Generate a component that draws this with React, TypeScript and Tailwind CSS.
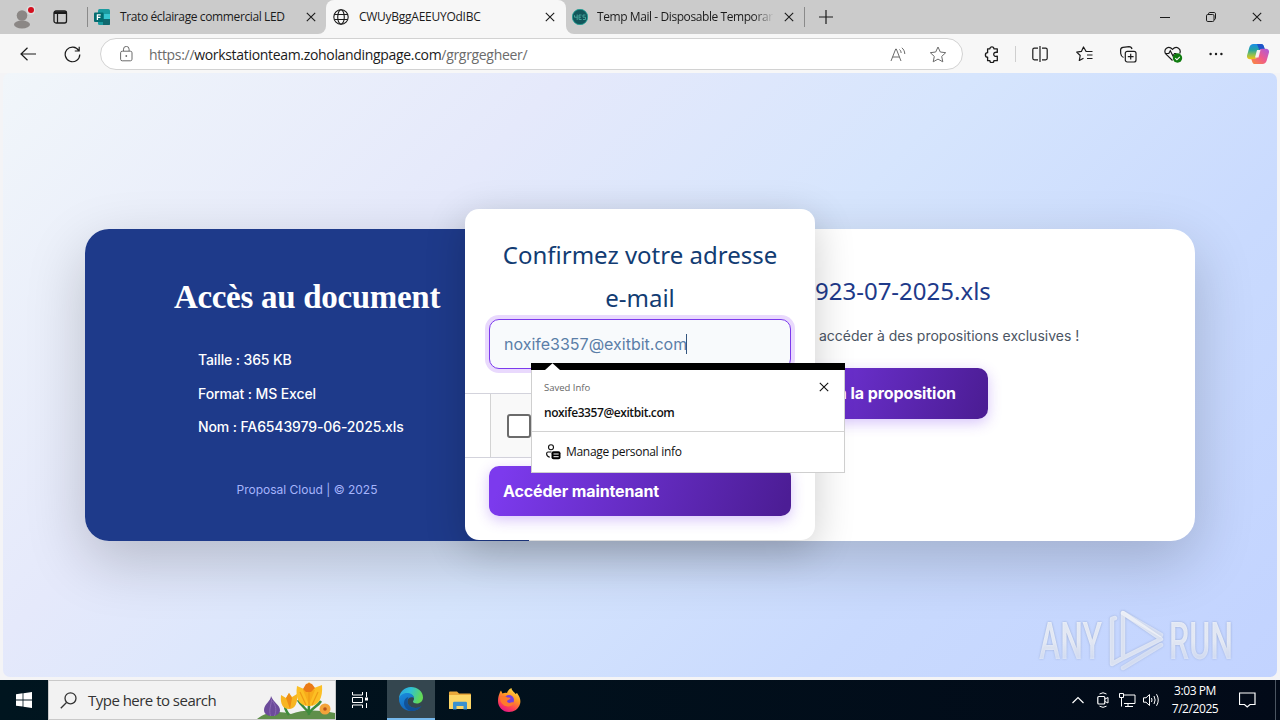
import React from "react";

type IconProps = { w: number; h: number; children: React.ReactNode; className?: string };

function Icon({ w, h, children, className = "" }: IconProps) {
  return (
    <svg width={w} height={h} viewBox={`0 0 ${w} ${h}`} fill="none" stroke="currentColor" className={`shrink-0 ${className}`}>
      {children}
    </svg>
  );
}

const Close = ({ className = "" }: { className?: string }) => (
  <Icon w={10} h={10} className={className}>
    <path d="M.8.8l8.4 8.4M9.2.8L.8 9.2" strokeWidth="1.1" />
  </Icon>
);

function TabStrip() {
  return (
    <div className="flex h-[34px] bg-[#cbcbcb] text-[12px] text-[#1b1b1b]">
      <div className="flex w-[326px] shrink-0 items-center bg-[#f7f7f7]">
        <div className="flex h-full w-full items-center rounded-br-[8px] bg-[#cbcbcb]">
          <Icon w={22} h={24} className="ml-[13px]">
            <circle cx="9" cy="10.500" r="5.300" fill="#8b8785" stroke="none" />
            <ellipse cx="9" cy="19.500" rx="8" ry="4" fill="#8b8785" stroke="none" />
            <circle cx="18" cy="5" r="4.500" fill="#dedede" stroke="none" />
            <circle cx="18" cy="5" r="3" fill="#d40f1f" stroke="none" />
          </Icon>
          <Icon w={15} h={14} className="ml-[18px]">
            <rect x="1" y="1" width="12.500" height="12" rx="2" strokeWidth="1.300" />
            <path d="M1 2.700h12.500" strokeWidth="2.600" />
            <path d="M4.500 3v10" strokeWidth="1.200" />
          </Icon>
          <div className="ml-[19px] h-5 w-px bg-[#8a8a8a]" />
          <Icon w={16} h={16} className="ml-[6px]">
            <rect x="4" y="0" width="12" height="16" rx="1.500" fill="#1b9ba0" stroke="none" />
            <path d="M10 5h6v5h-6z" fill="#37c6d0" stroke="none" />
            <path d="M9 10h7v5a1 1 0 0 1-1 1H9z" fill="#10686e" stroke="none" />
            <rect x="0" y="3.500" width="9.500" height="9.500" rx="1" fill="#036c70" stroke="none" />
            <path d="M3.400 11V5.800h3.300M3.400 8.300h3" stroke="#fff" strokeWidth="1.300" />
          </Icon>
          <span className="ml-[10px] w-[166px] whitespace-nowrap tracking-[-0.38px]">Trato éclairage commercial LED</span>
          <Close className="ml-[20px]" />
        </div>
      </div>
      <div className="w-[240px] shrink-0 bg-[#cbcbcb]">
        <div className="flex h-full items-center rounded-t-[8px] bg-[#f7f7f7]">
          <Icon w={16} h={16} className="ml-[7px]">
            <circle cx="8" cy="8" r="7.200" strokeWidth="1.100" />
            <ellipse cx="8" cy="8" rx="3.300" ry="7.200" strokeWidth="1.100" />
            <path d="M1.500 5.500h13M1.500 10.500h13" strokeWidth="1.100" />
          </Icon>
          <span className="ml-[10px] w-[160px] whitespace-nowrap tracking-[-0.26px]">CWUyBggAEEUYOdIBC</span>
          <Close className="ml-[26px]" />
        </div>
      </div>
      <div className="min-w-0 flex-1 bg-[#f7f7f7]">
        <div className="flex h-full items-center rounded-bl-[8px] bg-[#cbcbcb]">
          <Icon w={16} h={16} className="ml-[6px]">
            <circle cx="8" cy="8" r="7.700" fill="#12565b" stroke="#1da598" strokeWidth=".8" />
            <path d="M2.500 6.200v2h3M5.200 5.500V11M7 6h2.500M7 8.200h2M7 10.500h2.500M7 6v4.500M13.500 6H11v2.200h2.500v2.300H11" stroke="#49a99f" strokeWidth=".9" />
          </Icon>
          <span className="ml-[9px] w-[177px] whitespace-nowrap bg-gradient-to-r from-[#1b1b1b] from-88% to-[#cbcbcb] bg-clip-text tracking-[-0.42px] text-transparent">
            Temp Mail - Disposable Temporar
          </span>
          <Close className="ml-[10px]" />
          <div className="ml-[10px] h-5 w-px bg-[#8a8a8a]" />
          <Icon w={14} h={14} className="ml-[14px]">
            <path d="M7 0v14M0 7h14" strokeWidth="1.200" />
          </Icon>
          <div className="ml-auto flex items-center gap-[36px] pr-[18px]">
            <Icon w={10} h={10}><path d="M0 5.500h10" /></Icon>
            <Icon w={10} h={10}>
              <rect x=".5" y="2.500" width="7.500" height="7" rx="1.300" />
              <path d="M2.500 2.500V1.800C2.500 1 3 .5 3.800.5H8c1 0 1.500.5 1.500 1.500v4.500c0 .6-.5 1-1.300 1" />
            </Icon>
            <Close />
          </div>
        </div>
      </div>
    </div>
  );
}

function Copilot() {
  return (
    <svg width="22" height="20" viewBox="0 0 22 20" className="shrink-0">
      <defs>
        <linearGradient id="cpA" x1="0" y1="0" x2="0" y2="1">
          <stop offset="0" stopColor="#1a8fe8" />
          <stop offset=".4" stopColor="#27a5a0" />
          <stop offset=".7" stopColor="#8cc152" />
          <stop offset="1" stopColor="#f4c214" />
        </linearGradient>
        <linearGradient id="cpB" x1="1" y1="0" x2="0" y2="1">
          <stop offset="0" stopColor="#a85be0" />
          <stop offset=".5" stopColor="#ee5a8c" />
          <stop offset="1" stopColor="#fb8d3a" />
        </linearGradient>
      </defs>
      <path d="M6.500 0H14c1.500 0 2.300.8 2.800 2.300L17.700 5H15c-1.800 0-2.600.8-3.100 2.500L9.800 13c-.5 1.500-1.300 2.200-2.800 2.200H3C.6 15.200-.4 13.500.1 11.200L2.300 3.500C3 1.200 4.200 0 6.500 0z" fill="url(#cpA)" />
      <path d="M10 0h4c1.500 0 2.300.8 2.800 2.300L17.700 5H15c-1.300 0-2 .4-2.600 1.300z" fill="#2054c9" />
      <path d="M15.500 20H8c-1.500 0-2.300-.8-2.800-2.300L4.300 15H7c1.800 0 2.600-.8 3.100-2.500L12.200 7c.5-1.500 1.300-2.200 2.800-2.200h4c2.400 0 3.400 1.700 2.900 4l-2.200 7.700C19 18.800 17.800 20 15.500 20z" fill="url(#cpB)" />
      <path d="M10 6h3.500l-2 7.500H8z" fill="#f7f0f2" />
    </svg>
  );
}

function Toolbar() {
  return (
    <div className="flex h-[39px] items-center bg-[#f7f7f7] pb-px pt-[2px] text-[#1b1b1b]">
      <Icon w={16} h={14} className="ml-[20px]">
        <path d="M16 7H1M7.500 .8L1 7l6.500 6.200" strokeWidth="1.200" />
      </Icon>
      <Icon w={17} h={17} className="ml-[28px]">
        <path d="M14.800 4.700A7.300 7.300 0 1 0 15.800 8.500M15.200.8v4.200h-4.400" strokeWidth="1.200" />
      </Icon>
      <div className="ml-[19px] flex h-8 w-[863px] items-center rounded-full border border-[#d2d2d2] bg-white text-[#6b6b6b]">
        <Icon w={13} h={16} className="ml-[19px]">
          <rect x=".6" y="5.200" width="11.400" height="9.600" rx="1.600" />
          <path d="M3.500 5V3.200a2.800 2.800 0 0 1 5.600 0V5" />
          <circle cx="6.300" cy="10" r=".9" fill="currentColor" stroke="none" />
        </Icon>
        <span className="ml-[16px] whitespace-nowrap text-[14px] tracking-[-0.32px]">
          https://<span className="text-[#1b1b1b]">workstationteam.zoholandingpage.com</span>/grgrgegheer/
        </span>
        <Icon w={17} h={15} className="ml-auto">
          <path d="M1 14L5.700 2h.6L11 14M2.600 10h6.700M9.500 2.500c1 .8 1.600 2 1.600 3.500M11.800.8c1.800 1.400 2.800 3.200 3 6.200" />
        </Icon>
        <Icon w={18} h={17} className="ml-[22px] mr-[15px]">
          <path d="M9 1l2.300 5 5.400.7-4 3.700 1.100 5.400L9 13.100l-4.800 2.700 1.100-5.400-4-3.700L6.700 6z" strokeLinejoin="round" />
        </Icon>
      </div>
      <Icon w={16} h={17} className="ml-[21px]">
        <path d="M3.600 2.800h2.300a2 2 0 0 1 4 0h3.400v3.600c-2.600-.6-3.600.6-3.600 1.900s1 2.500 3.600 1.900v4.500H9.900a2 2 0 0 1-4 0H3.600v-3.600a2 2 0 0 1 0-4.400z" strokeWidth="1.300" strokeLinejoin="round" />
      </Icon>
      <div className="ml-[15px] h-4 w-px bg-[#cfcfcf]" />
      <Icon w={16} h={16} className="ml-[16px]">
        <path d="M6 2.200H2.300Q.8 2.200.8 3.700v8.600q0 1.500 1.500 1.500H6M10 2.200h3.700q1.500 0 1.500 1.500v8.600q0 1.500-1.500 1.500H10M8 0v16" strokeWidth="1.200" />
      </Icon>
      <Icon w={17} h={16} className="ml-[28px]">
        <path d="M9.500 5.500h7M11 9h5.500M11 12.500h5.500M10 5.300L7.500 1 5.400 5.400l-4.700.7L4.200 9.500 3.300 14.500l4.200-2.200" strokeWidth="1.200" strokeLinejoin="round" />
      </Icon>
      <Icon w={17} h={17} className="ml-[27px]">
        <rect x="5.300" y="5.300" width="10.700" height="10.700" rx="2" strokeWidth="1.200" />
        <path d="M10.700 7.800v5.800M7.800 10.700h5.800M3.500 11.500C1.800 10.800.9 9.500.7 7.500L.6 4C.6 2.500 1.500 1.500 3 1.300L9 .7c1.500 0 2.600.7 3 2.300" strokeWidth="1.200" />
      </Icon>
      <Icon w={19} h={17} className="ml-[27px]">
        <path d="M8.500 14.500L2 8.200C.3 6.300.6 3.500 2.500 2.200c2-1.400 4.300-.8 6 1.200 1.700-2 4-2.600 6-1.200 1.700 1.200 2 3.500 1.200 5.300M1 7.500h3.800l1.500-2.800L9 10l1.500-2.500h2" strokeWidth="1.200" />
        <circle cx="13.500" cy="12" r="4.700" fill="#107c10" stroke="none" />
        <path d="M11.300 12.200l1.600 1.600 2.900-3" stroke="#fff" strokeWidth="1.100" />
      </Icon>
      <Icon w={14} h={4} className="ml-[26px]">
        <g fill="currentColor" stroke="none">
          <circle cx="1.600" cy="2" r="1.200" /><circle cx="7" cy="2" r="1.200" /><circle cx="12.400" cy="2" r="1.200" />
        </g>
      </Icon>
      <div className="ml-[24px]"><Copilot /></div>
    </div>
  );
}

function SavedInfo() {
  return (
    <div className="absolute left-[66px] top-[154px] z-20 flex h-[110px] w-[314px] flex-col font-['Open_Sans','Noto_Sans',sans-serif] text-[12px] text-[#111]">
      <div className="h-[7px] bg-black">
        <svg width="40" height="7" viewBox="0 0 40 7"><path d="M14 7L21.500.3 29 7z" fill="#fff" /></svg>
      </div>
      <div className="flex flex-1 flex-col border-x border-b border-[#cfcfcf] bg-white">
        <div className="flex h-[62px] flex-col border-b border-[#d2d2d2] pl-[12px]">
          <div className="flex items-center justify-between pr-[15px] pt-[10px]">
            <span className="text-[9.500px] leading-[16px] text-[#666]">Saved Info</span>
            <Close className="mb-[2px]" />
          </div>
          <span className="mt-[9px] text-[12px] font-semibold leading-[16px] tracking-[-0.42px]">noxife3357@exitbit.com</span>
        </div>
        <div className="flex flex-1 items-center pl-[14px]">
          <Icon w={15} h={16}>
            <circle cx="5" cy="3.200" r="2.500" strokeWidth="1.100" />
            <path d="M5.500 8H2.200C1 8 .6 8.800.6 9.700c0 1.800 1 2.900 3.200 3.500" strokeWidth="1.100" />
            <rect x="5.500" y="7.300" width="9" height="8" rx="2" fill="#000" stroke="none" />
            <path d="M7.500 10h5.200M7.500 12.700h5.200" stroke="#fff" strokeWidth="1" />
          </Icon>
          <span className="ml-[5px] tracking-[-0.3px]">Manage personal info</span>
        </div>
      </div>
    </div>
  );
}

function Modal() {
  return (
    <div className="absolute left-[380px] top-[-20px] z-10 flex h-[331px] w-[350px] flex-col rounded-[14px] bg-white shadow-[0_10px_40px_rgba(0,0,0,0.2)]">
      <h2 className="mx-[24px] mt-[24px] h-[86px] text-center font-['Noto_Sans','Open_Sans',sans-serif] text-[24px] leading-[43px] text-[#123c73]">
        Confirmez votre adresse
        <br />
        e-mail
      </h2>
      <div className="mx-[24px] flex h-[50px] items-center rounded-[10px] border border-[#7c3aed] bg-[#f8fafc] pl-[14px] text-[16px] text-[#5b7ea8] ring-4 ring-[#e9d9fd]">
        <span>noxife3357@exitbit.com</span>
        <span className="-ml-px h-5 w-px bg-[#33557f]" />
      </div>
      <div className="mt-[24px] flex h-[65px] border-y border-[#d3d3dc]">
        <div className="ml-[25px] flex flex-1 items-center border-l border-[#d3d3d3] bg-[#f9f9f9] pl-[16px]">
          <div className="h-6 w-6 rounded-[3px] border-2 border-[#6b6b6b] bg-white" />
        </div>
      </div>
      <div className="mx-[24px] mt-[8px] flex h-[50px] items-center rounded-[10px] bg-[linear-gradient(110deg,#7c3aed_5%,#4c1d95_97%)] pl-[14px] text-[16px] font-bold tracking-[-0.13px] text-white shadow-[0_4px_14px_rgba(124,58,237,0.3)]">
        Accéder maintenant
      </div>
      <SavedInfo />
    </div>
  );
}

function Watermark() {
  return (
    <svg width="210" height="66" viewBox="1036 606 210 66" className="absolute bottom-[5px] right-[31px] overflow-visible drop-shadow-[0_0_1px_rgba(90,110,150,0.6)]">
      <defs>
        <linearGradient id="wm" x1="0" y1="0" x2="0" y2="1">
          <stop offset=".5" stopColor="#fff" stopOpacity=".72" />
          <stop offset=".75" stopColor="#fff" stopOpacity=".5" />
        </linearGradient>
      </defs>
      <g fill="url(#wm)" fontFamily="Roboto, sans-serif" fontSize="52" fontWeight="500">
        <text x="1039" y="659" textLength="63" lengthAdjust="spacingAndGlyphs">ANY</text>
        <text x="1169" y="659" textLength="64" lengthAdjust="spacingAndGlyphs">RUN</text>
      </g>
      <g fill="none" stroke="#fff" strokeOpacity=".62" strokeWidth="4.500" strokeLinejoin="round" strokeLinecap="round">
        <path d="M1115 618l-3 1v45l9-5 40-20-38-26v43" />
        <path d="M1123 613l38 22M1123 668l38-23" strokeOpacity=".5" />
      </g>
    </svg>
  );
}

function Page() {
  return (
    <div className="h-[607px] bg-[#f4f4f6] px-[3px] pb-[3px]">
      <div className="relative flex h-full flex-col overflow-hidden rounded-[7px] bg-[linear-gradient(135deg,#f1f6fa_0%,#e5e9fb_30%,#d6e5fd_52%,#c9dafe_75%,#c2d3ff_100%)] px-[82px] pt-[156px] font-[Inter,sans-serif]">
        <div className="relative flex h-[312px] shrink-0 rounded-[24px] bg-white shadow-[0_20px_60px_rgba(0,0,0,0.2)]">
          <div className="flex w-[444px] flex-col items-center rounded-l-[24px] bg-[#1e3a8a] text-white">
            <h1 className="mt-[46px] whitespace-nowrap font-['Liberation_Serif',serif] text-[33px] font-bold leading-[44px] tracking-[-0.3px]">Accès au document</h1>
            <div className="mt-[24px] flex w-full flex-col pl-[113px] text-[14px] font-medium leading-[33.500px] tracking-[-0.12px]">
              <span>Taille : 365 KB</span>
              <span>Format : MS Excel</span>
              <span>Nom : FA6543979-06-2025.xls</span>
            </div>
            <span className="mt-[36px] text-[12px] leading-[20px] text-[#a5b4fc]">Proposal Cloud | © 2025</span>
          </div>
          <div className="flex min-w-0 flex-1 flex-col overflow-hidden rounded-r-[24px]">
            <h2 className="ml-[286px] mt-[40px] whitespace-nowrap font-['Noto_Sans','Open_Sans',sans-serif] text-[24px] leading-[43px] text-[#1e3a8a]">923-07-2025.xls</h2>
            <p className="ml-[290px] mt-[12px] whitespace-nowrap text-[14px] leading-[24px] text-[#4b5563]">accéder à des propositions exclusives !</p>
            <div className="ml-[207px] mt-[20px] flex h-[51px] w-[252px] shrink-0 items-center justify-end rounded-[10px] bg-[linear-gradient(110deg,#7c3aed_5%,#4c1d95_97%)] pb-[2px] pr-[32px] text-[16px] font-bold tracking-[-0.08px] text-white shadow-[0_4px_14px_rgba(124,58,237,0.3)]">
              à la proposition
            </div>
          </div>
          <Modal />
        </div>
        <Watermark />
      </div>
    </div>
  );
}

function Flowers() {
  return (
    <svg width="78" height="38" viewBox="0 0 78 38" className="ml-auto shrink-0 self-end">
      <path d="M0 38c8-7 22-9 34-5 12-5 30-4 44-1v6z" fill="#5f8f4a" />
      <path d="M32 34c-4-5-5-8-4-13M52 34c-1-8 0-12 2-18M52 32c3-5 9-7 12-12M52 32c-4-5-8-8-11-13" stroke="#3e8b3c" strokeWidth="2.500" fill="none" />
      <path d="M14 15c0 5-7 8-7 14 0 4 4 6 8 6s8-2 8-6c0-5-7-8-9-14z" fill="#6c4b9b" />
      <path d="M14.500 18c0 6-3 10-1 17M15.500 20c4 5 4 10 2 15" stroke="#8a69b3" fill="none" />
      <path d="M24 14l5 3 3-5 3 4 5-3c1 9-2 15-8 15s-9-5-8-14z" fill="#f7b521" />
      <path d="M29 17l3-5 3 5-2 11z" fill="#ee8c13" />
      <path d="M40 5l7 3 5-7 5 6 8-3c1 13-3 21-13 21S38 18 40 5z" fill="#fcbf24" />
      <path d="M46 9l6 15 6-15" fill="#f8ac1a" />
      <path d="M43 11l6 13M61 11l-6 13M52 11v14" fill="none" stroke="#ee9a15" strokeWidth="1.200" />
      <path d="M46 8l3-5 3-1 3 1 3 4-4 4h-5z" fill="#ea7a17" />
      <circle cx="68" cy="28" r="5.500" fill="#f3a33a" />
      <circle cx="68" cy="28" r="1.800" fill="#b8551a" />
    </svg>
  );
}

function EdgeLogo() {
  return (
    <svg width="24" height="24" viewBox="0 0 24 24">
      <defs>
        <linearGradient id="egA" x1="0" y1="0" x2="1" y2=".3">
          <stop offset="0" stopColor="#2b9fe2" /><stop offset=".5" stopColor="#2fc1d4" /><stop offset="1" stopColor="#62d957" />
        </linearGradient>
        <linearGradient id="egB" x1="0" y1="0" x2=".5" y2="1">
          <stop offset="0" stopColor="#1a8ddd" /><stop offset="1" stopColor="#1262b8" />
        </linearGradient>
      </defs>
      <path d="M0 12C0 5 5.500 0 12 0s12 4.600 12 10.500c0 3.800-3 6-6 6-2.500 0-4-1-4-2 0-.7 1-1.200 1-3 0-2.700-2.600-4.500-6-4.500-4 0-8 2-9 5z" fill="url(#egA)" />
      <path d="M0 12c.5-3.500 4-6 8-6 3.500 0 6.500 1.800 7 5-1-1-6-1.500-6.500 3-.4 4 3.500 7 8 7 2.500 0 4.500-1 6-2-2 3-6 5-10.500 5C5 24 0 18.500 0 12z" fill="url(#egB)" />
      <path d="M8.500 14c-.4 4 3.500 7 8 7 2.500 0 4.500-1 6-2-2 3-6 5-10.500 5-4-1-7-4-7-8 0-3 2-5.500 4.500-6C8.800 11 8.600 12.500 8.500 14z" fill="#114a8b" opacity=".8" />
    </svg>
  );
}

function Firefox() {
  return (
    <svg width="24" height="24" viewBox="0 0 24 24">
      <defs>
        <linearGradient id="ffA" x1=".8" y1="0" x2=".3" y2="1">
          <stop offset="0" stopColor="#ffe14d" /><stop offset=".4" stopColor="#ff9a22" /><stop offset=".75" stopColor="#ff4055" /><stop offset="1" stopColor="#e31587" />
        </linearGradient>
      </defs>
      <path d="M2.500 5.500C3 3.500 4 2.500 4 2.500l1.500 3C7 4.500 9 4.500 10 5c1-3 3-4.500 4.500-5 0 2.500 3 4 4 6l1.500-1c3 4 4 7 3 11-1.300 5-6 8-11 8C5.500 24 1 19 1 13c0-3 .5-5 1.500-7.500z" fill="url(#ffA)" />
      <circle cx="12" cy="12" r="5" fill="#7540dd" />
      <path d="M3 9c3-2 6-1 7.500.5 2 0 3 .5 3 1-1 1.500-3 1.500-3.500 2.500 0 1.500 2 2.500 4 1.500 2-.8 3 0 2.500 1-1.500 3-6.500 4-10 1.500C3.500 15 3 12 3 9z" fill="#ff7a2b" />
    </svg>
  );
}

function Taskbar() {
  return (
    <div className="flex h-10 items-center bg-gradient-to-r from-[#00151f] to-[#020a18] text-white">
      <div className="flex w-12 justify-center">
        <svg width="16" height="16" viewBox="0 0 16 16" fill="#fff">
          <path d="M0 2.200L6.600 1.300v6.200H0zM7.400 1.200L16 0v7.500H7.400zM0 8.400h6.600v6.200L0 13.700zM7.400 8.400H16V16l-8.600-1.200z" />
        </svg>
      </div>
      <div className="flex h-10 w-[288px] items-center overflow-hidden border border-[#c9c9c9] bg-[#f2f2f2] text-[#333]">
        <Icon w={17} h={17} className="ml-[11px]">
          <circle cx="10.500" cy="6.300" r="5.500" strokeWidth="1.300" />
          <path d="M6.500 10.500L.8 16.200" strokeWidth="1.300" />
        </Icon>
        <span className="ml-[11px] whitespace-nowrap text-[15px] tracking-[-0.52px]">Type here to search</span>
        <Flowers />
      </div>
      <div className="flex w-[49px] justify-center">
        <Icon w={17} h={16}>
          <path d="M.5 0v3h10V0M.5 16v-3h10v3M.5 5.500h10v5H.5zM14.500 0v5M14.500 11v5" />
          <rect x="13" y="5.500" width="3" height="3" fill="#fff" stroke="none" />
        </Icon>
      </div>
      <div className="ml-[2px] flex h-10 w-12 items-center justify-center border-b-2 border-[#76b9ed] bg-[#34464f]"><EdgeLogo /></div>
      <div className="flex w-[49px] justify-center">
        <svg width="22" height="19" viewBox="0 0 22 19">
          <path d="M0 1.500Q0 .5 1 .5h7l2 2h11q1 0 1 1V18H0z" fill="#e9a83a" />
          <path d="M0 4h22v13q0 1-1 1H1q-1 0-1-1z" fill="#fcd667" />
          <path d="M4 18.500V12q0-1.200 1.200-1.200h11.600Q18 10.800 18 12v6.500h-3.500V15h-7v3.500z" fill="#3a91cf" />
        </svg>
      </div>
      <div className="flex w-[49px] justify-center"><Firefox /></div>
      <div className="ml-auto flex items-center">
        <Icon w={12} h={8}><path d="M.5 7L6 1.500 11.500 7" strokeWidth="1.200" /></Icon>
        <Icon w={12} h={16} className="ml-[13px]">
          <rect x=".8" y="4.500" width="7" height="7.500" rx="1" strokeWidth="1.200" />
          <path d="M8 7l3-1.500v5.500L8 9.500M2.500 2Q6-.5 9.500 2M2.500 14.200Q6 16.500 9.500 14.200" />
        </Icon>
        <Icon w={17} h={14} className="ml-[10px]">
          <path d="M4.500 2h11.500v8.500H5M9 10.500V13M6 13.500h8M.5.500h4v4h-4zM2.500 4.500v9" />
        </Icon>
        <Icon w={17} h={14} className="ml-[7px]">
          <path d="M.5 4.800h2.500L6.500 1.500v11L3 9.200H.5zM8.500 5q1 2 0 4M11 3q2.300 4 0 8M13.500 1.200q3.500 5.800 0 11.600" />
        </Icon>
        <div className="ml-[10px] flex w-[50px] flex-col items-center whitespace-nowrap text-[12px] leading-[18px] tracking-[-0.42px]">
          <span>3:03 PM</span>
          <span>7/2/2025</span>
        </div>
        <Icon w={17} h={16} className="ml-[19px]">
          <path d="M.5 1h15.500v11.500h-5L8.200 15l-2.700-2.500h-5z" strokeWidth="1.200" />
        </Icon>
        <div className="ml-[19px] mr-[4px] h-10 w-px bg-[#4b5561]" />
      </div>
    </div>
  );
}

export default function App() {
  return (
    <div className="h-[720px] w-[1280px] overflow-hidden font-['Open_Sans','Noto_Sans',sans-serif]">
      <TabStrip />
      <Toolbar />
      <Page />
      <Taskbar />
    </div>
  );
}
